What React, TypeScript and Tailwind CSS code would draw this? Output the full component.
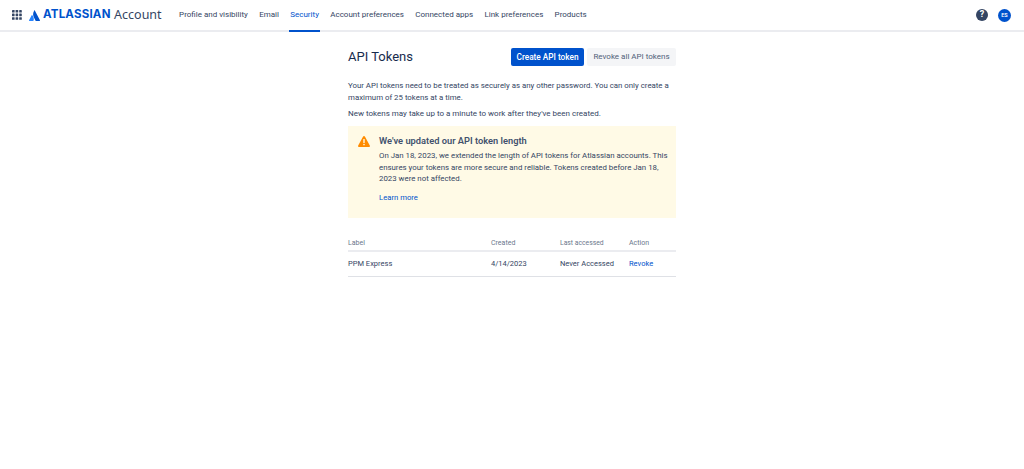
const navItems = [
  "Profile and visibility",
  "Email",
  "Security",
  "Account preferences",
  "Connected apps",
  "Link preferences",
  "Products",
];

const AppSwitcher = () => (
  <svg width="10" height="10" viewBox="0 0 10 10" fill="#344563">
    {[0, 3.6, 7.2].map((y) =>
      [0, 3.6, 7.2].map((x) => <rect key={`${x}-${y}`} x={x} y={y} width="2.6" height="2.6" rx="0.4" />)
    )}
  </svg>
);

const AtlassianMark = () => (
  <svg width="11" height="11" viewBox="0 0 24 24" fill="#2684ff">
    <path d="M7.1 11.4c-.4-.4-.9-.4-1.2.1L.1 22.6c-.3.6.1 1.2.7 1.2h8.100c.3 0 .6-.2.7-.4 1.700-3.600.7-9-2.500-12z" />
    <path d="M11.4.9C8.2 6 8.4 11.700 10.500 15.900l3.900 7.500c.1.300.4.400.7.400h8.100c.6 0 1-.6.700-1.200L12.700.900c-.3-.500-1-.500-1.300 0z" fill="#0052cc" />
  </svg>
);

const WarningIcon = () => (
  <svg width="12" height="11" viewBox="0 0 12 11">
    <path d="M5.100.6c.4-.7 1.400-.7 1.800 0l4.900 8.900c.4.700-.1 1.500-.9 1.500H1.100c-.8 0-1.300-.8-.9-1.500z" fill="#ff8b00" />
    <rect x="5.300" y="3" width="1.400" height="4" rx=".6" fill="#fffae6" />
    <circle cx="6" cy="8.600" r=".8" fill="#fffae6" />
  </svg>
);

export default function App() {
  return (
    <div className="min-h-[469px] bg-white font-['Roboto','Noto_Sans',sans-serif] text-[7.85px] text-[#172b4d]">
      <header className="flex h-[32px] items-center border-b-2 border-[#ebecf0] pl-[12px] pr-[13px]">
        <AppSwitcher />
        <div className="ml-[7px] flex items-center gap-[3px]">
          <AtlassianMark />
          <span className="font-['Inter',sans-serif] text-[11.5px] font-bold tracking-[0.2px] text-[#0052cc]">ATLASSIAN</span>
          <span className="ml-[0.5px] font-['Noto_Sans',sans-serif] text-[12.5px] text-[#344563]">Account</span>
        </div>
        <nav className="ml-[17.5px] flex h-full items-stretch gap-[11.3px] text-[8px]">
          {navItems.map((item) => (
            <a
              key={item}
              className={
                item === "Security"
                  ? "-mx-[1.5px] -mb-[2px] flex items-center border-b-2 border-[#0052cc] px-[1.5px] text-[#0052cc]"
                  : "-mb-[2px] flex items-center border-b-2 border-transparent text-[#344563]"
              }
            >
              {item}
            </a>
          ))}
        </nav>
        <div className="ml-auto flex items-center gap-[10px]">
          <span className="flex h-[12px] w-[12px] items-center justify-center rounded-full bg-[#344563] text-[9px] font-bold text-white">?</span>
          <span className="flex h-[13px] w-[13px] items-center justify-center rounded-full bg-[#0052cc] text-[5.5px] font-semibold text-white">ES</span>
        </div>
      </header>

      <main className="ml-[348px] w-[328px] pt-[15px]">
        <div className="flex items-center justify-between">
          <h1 className="text-[13px] font-normal text-[#172b4d]">API Tokens</h1>
          <div className="flex gap-[3px]">
            <button className="h-[18px] w-[73px] rounded-[2px] bg-[#0052cc] text-[8.25px] font-medium text-white">Create API token</button>
            <button className="h-[18px] w-[89px] rounded-[2px] bg-[#f4f5f7] text-[8px] text-[#505f79]">Revoke all API tokens</button>
          </div>
        </div>

        <p className="mt-[13px] leading-[12px] text-[#344563]">
          Your API tokens need to be treated as securely as any other password. You can only create a maximum of 25 tokens at a time.
        </p>
        <p className="mt-[4px] text-[8px] leading-[12px] text-[#344563]">New tokens may take up to a minute to work after they've been created.</p>

        <div className="mt-[6px] flex h-[92px] bg-[#fffae6] pl-[10px] pr-[8px] pt-[9px]">
          <div className="w-[21px] shrink-0 pt-[1px]">
            <WarningIcon />
          </div>
          <div>
            <h2 className="text-[9.3px] font-semibold leading-[12px] text-[#42526e]">We've updated our API token length</h2>
            <p className="mt-[3.5px] text-[7.85px] leading-[11.7px] text-[#344563]">
              On Jan 18, 2023, we extended the length of API tokens for Atlassian accounts. This ensures your tokens are more secure and reliable. Tokens created before Jan 18, 2023 were not affected.
            </p>
            <a className="mt-[7px] block text-[7.7px] leading-[12px] text-[#0052cc]">Learn more</a>
          </div>
        </div>

        <table className="mt-[20px] w-full table-fixed">
          <thead>
            <tr className="border-b-2 border-[#ebecf0] text-left text-[#6b778c]">
              <th className="h-[13px] w-[143px] pb-[1px] text-[7px] font-normal">Label</th>
              <th className="w-[69px] pb-[1px] text-[7px] font-normal">Created</th>
              <th className="w-[69px] pb-[1px] text-[6.8px] font-normal">Last accessed</th>
              <th className="pb-[1px] text-[7px] font-normal">Action</th>
            </tr>
          </thead>
          <tbody>
            <tr className="border-b border-[#dfe1e6] text-[7.5px] text-[#344563]">
              <td className="h-[26px] pb-[1px]">PPM Express</td>
              <td className="pb-[1px]">4/14/2023</td>
              <td className="pb-[1px]">Never Accessed</td>
              <td className="pb-[1px] text-[#0052cc]">Revoke</td>
            </tr>
          </tbody>
        </table>
      </main>
    </div>
  );
}
